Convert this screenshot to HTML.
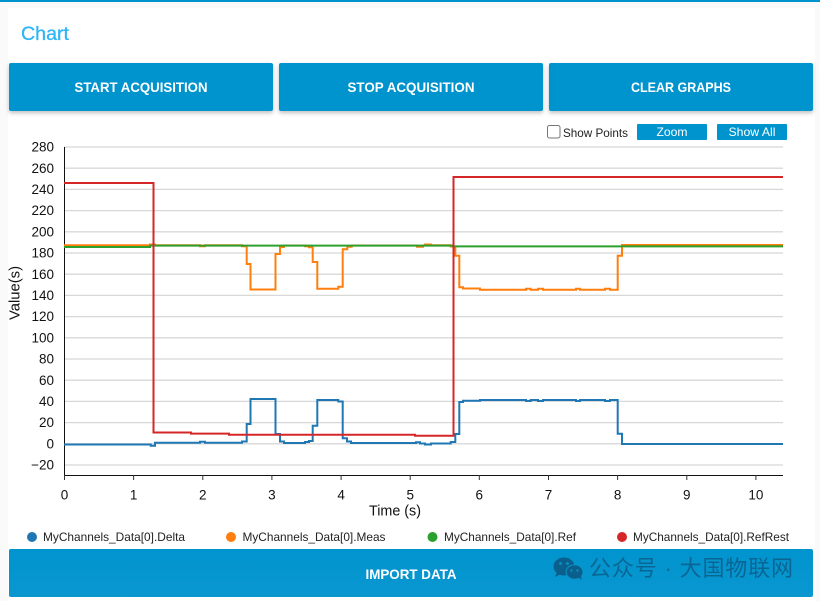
<!DOCTYPE html>
<html><head><meta charset="utf-8"><style>
html,body{margin:0;padding:0;background:#fafafa;width:820px;height:601px;overflow:hidden}
svg{display:block}
text{font-family:"Liberation Sans","Noto Sans CJK SC",sans-serif}
.b{fill:#fff;font-weight:bold;font-size:14px;text-anchor:middle}
.t{fill:#111;font-size:13.5px}
.y{text-anchor:end}
.x{text-anchor:middle}
.l{fill:#222;font-size:12px}
.g line{stroke:#d8d8d8;stroke-width:1.3}
.d{fill:none;stroke-width:2;stroke-linejoin:miter}
</style></head><body>
<svg width="820" height="601" viewBox="0 0 820 601" xmlns="http://www.w3.org/2000/svg">
<defs>
<filter id="s" x="-5%" y="-20%" width="110%" height="150%"><feDropShadow dx="0" dy="2" stdDeviation="2" flood-color="#000" flood-opacity=".25"/></filter>
<linearGradient id="w" x1="0" x2="0" y1="0" y2="1"><stop offset="0" stop-color="#0094ce"/><stop offset="1" stop-color="#0a97d0"/></linearGradient>
</defs>
<rect width="820" height="601" fill="#fafafa"/>
<rect x="8" y="8" width="807" height="593" fill="#fff"/>
<rect width="820" height="2" fill="#0094ce"/>
<text x="21" y="40" font-size="19.5" fill="#2db5f7" stroke="#2db5f7" stroke-width=".3" textLength="48" lengthAdjust="spacingAndGlyphs">Chart</text>

<g filter="url(#s)" fill="#0094ce">
<rect x="9" y="63" width="264" height="48" rx="2"/>
<rect x="279" y="63" width="264" height="48" rx="2"/>
<rect x="549" y="63" width="264" height="48" rx="2"/>
</g>
<text class="b" x="141" y="92" textLength="133" lengthAdjust="spacingAndGlyphs">START ACQUISITION</text>
<text class="b" x="411" y="92" textLength="127" lengthAdjust="spacingAndGlyphs">STOP ACQUISITION</text>
<text class="b" x="681" y="92" textLength="100" lengthAdjust="spacingAndGlyphs">CLEAR GRAPHS</text>

<rect x="547.5" y="125.5" width="12.5" height="12.5" rx="2" fill="#fff" stroke="#767676"/>
<text x="563" y="137" font-size="12" fill="#222" textLength="65" lengthAdjust="spacingAndGlyphs">Show Points</text>
<rect x="637" y="124" width="70" height="16" rx="1" fill="#0094ce"/>
<rect x="717" y="124" width="70" height="16" rx="1" fill="#0094ce"/>
<text x="672" y="136" font-size="12" fill="#fff" text-anchor="middle" textLength="31" lengthAdjust="spacingAndGlyphs">Zoom</text>
<text x="752" y="136" font-size="12" fill="#fff" text-anchor="middle" textLength="47" lengthAdjust="spacingAndGlyphs">Show All</text>

<g class="g">
<line x1="64" x2="783" y1="147" y2="147"/><line x1="64" x2="783" y1="168.2" y2="168.2"/><line x1="64" x2="783" y1="189.4" y2="189.4"/><line x1="64" x2="783" y1="210.6" y2="210.6"/><line x1="64" x2="783" y1="231.8" y2="231.8"/><line x1="64" x2="783" y1="253" y2="253"/><line x1="64" x2="783" y1="274.2" y2="274.2"/><line x1="64" x2="783" y1="295.4" y2="295.4"/><line x1="64" x2="783" y1="316.6" y2="316.6"/><line x1="64" x2="783" y1="337.8" y2="337.8"/><line x1="64" x2="783" y1="359" y2="359"/><line x1="64" x2="783" y1="380.2" y2="380.2"/><line x1="64" x2="783" y1="401.4" y2="401.4"/><line x1="64" x2="783" y1="422.6" y2="422.6"/><line x1="64" x2="783" y1="443.8" y2="443.8"/><line x1="64" x2="783" y1="465" y2="465"/>
</g>
<g class="t y">
<text x="54" y="151.5">280</text><text x="54" y="173">260</text><text x="54" y="194">240</text><text x="54" y="215">220</text><text x="54" y="236.5">200</text><text x="54" y="257.5">180</text><text x="54" y="279">160</text><text x="54" y="300">140</text><text x="54" y="321">120</text><text x="54" y="342.5">100</text><text x="54" y="363.5">80</text><text x="54" y="385">60</text><text x="54" y="406">40</text><text x="54" y="427">20</text><text x="54" y="448.5">0</text><text x="54" y="469.5">−20</text>
</g>
<path d="M64.5 147V475.5H783" fill="none" stroke="#111" stroke-width="1"/>
<path d="M64.5 475V480M133.6 475V480M202.8 475V480M271.9 475V480M341.1 475V480M410.2 475V480M479.3 475V480M548.5 475V480M617.6 475V480M686.8 475V480M755.9 475V480" stroke="#333" stroke-width="1"/>
<g class="t x">
<text x="64.5" y="499.5">0</text><text x="133.6" y="499.5">1</text><text x="202.8" y="499.5">2</text><text x="271.9" y="499.5">3</text><text x="341.1" y="499.5">4</text><text x="410.2" y="499.5">5</text><text x="479.3" y="499.5">6</text><text x="548.5" y="499.5">7</text><text x="617.6" y="499.5">8</text><text x="686.8" y="499.5">9</text><text x="755.9" y="499.5">10</text>
</g>
<text x="395" y="515.5" class="x" font-size="14.5" fill="#111" textLength="52" lengthAdjust="spacingAndGlyphs">Time (s)</text>
<text transform="translate(19.5 293) rotate(-90)" class="x" font-size="14.5" fill="#111" textLength="54" lengthAdjust="spacingAndGlyphs">Value(s)</text>

<path class="d" stroke="#1f77b4" d="M64 444.5H150.7V445.7H155V442.7H200V441.7H205V442.7H242V441.5H246.7V424H250.5V399H275.5V434H280V441.5H284V443H305V442H309V441H312.7V425.7H317.3V400H338.3V401.5H342.7V438.3H347V441.5H351V443H416V442.2H420V443.5H425V444.5H431V443.5H450.7V442H455.3V434H459.3V402H463V400.7H480V400H526V401H530.7V400H538V401H543V400H576V401H580V400H605V401H610V400H617.7V433.7H622V444H783"/>
<path class="d" stroke="#ff7f0e" d="M64 245.2H150V244.5H155V245.3H200V246.2H205V245.3H242V246.2H246.7V264H250.5V289.5H275.5V254H280V247H284V245.5H305V246.2H309V247.3H312.7V262H317.3V288.7H338.3V286.7H342.7V249.3H347.3V246.7H351.7V245.5H417V246.7H423V245.5H425V244.5H431V245.2H450.7V246.5H455.3V255.7H459.3V287.3H463V288.5H480V289.7H526V288.7H530.7V289.7H538V288.7H543V289.7H576V288.7H580V289.7H605V288.7H610V289.7H617.7V255.7H622V245H783"/>
<path class="d" stroke="#2ca02c" d="M64 247H150V245.6H453V246.4H783"/>
<path class="d" stroke="#d62728" d="M64 183H153.5V432.5H191V433.6H229V434.7H415V435.8H453.5V177H783"/>

<circle cx="32" cy="537" r="5" fill="#1f77b4"/><circle cx="231" cy="537" r="5" fill="#ff7f0e"/><circle cx="432.5" cy="537" r="5" fill="#2ca02c"/><circle cx="622" cy="537" r="5" fill="#d62728"/>
<text class="l" x="43" y="541" textLength="142" lengthAdjust="spacingAndGlyphs">MyChannels_Data[0].Delta</text>
<text class="l" x="242.5" y="541" textLength="143" lengthAdjust="spacingAndGlyphs">MyChannels_Data[0].Meas</text>
<text class="l" x="444" y="541" textLength="132" lengthAdjust="spacingAndGlyphs">MyChannels_Data[0].Ref</text>
<text class="l" x="633" y="541" textLength="156" lengthAdjust="spacingAndGlyphs">MyChannels_Data[0].RefRest</text>

<rect x="9" y="549" width="804" height="48" rx="2" fill="url(#w)"/>
<text class="b" x="411" y="579" font-size="13.5" textLength="91" lengthAdjust="spacingAndGlyphs">IMPORT DATA</text>
<g fill="#0b5f8c">
<ellipse cx="564" cy="566.5" rx="10.5" ry="9"/><path d="M557 572l-2 5 6-3z"/>
<ellipse cx="574.5" cy="572" rx="8.5" ry="7.3" stroke="#0a93cb" stroke-width="1"/><path d="M578 577l3.500 3-.5-5z"/>
</g>
<g fill="#0a93cb"><circle cx="560.500" cy="563.500" r="1.400"/><circle cx="567.500" cy="563.500" r="1.400"/><circle cx="571.500" cy="570.500" r="1.100"/><circle cx="577.500" cy="570.500" r="1.100"/></g>
<text x="589" y="576" font-size="22" fill="#0b6593" textLength="204" lengthAdjust="spacing">公众号 · 大国物联网</text>
</svg>
</body></html>
